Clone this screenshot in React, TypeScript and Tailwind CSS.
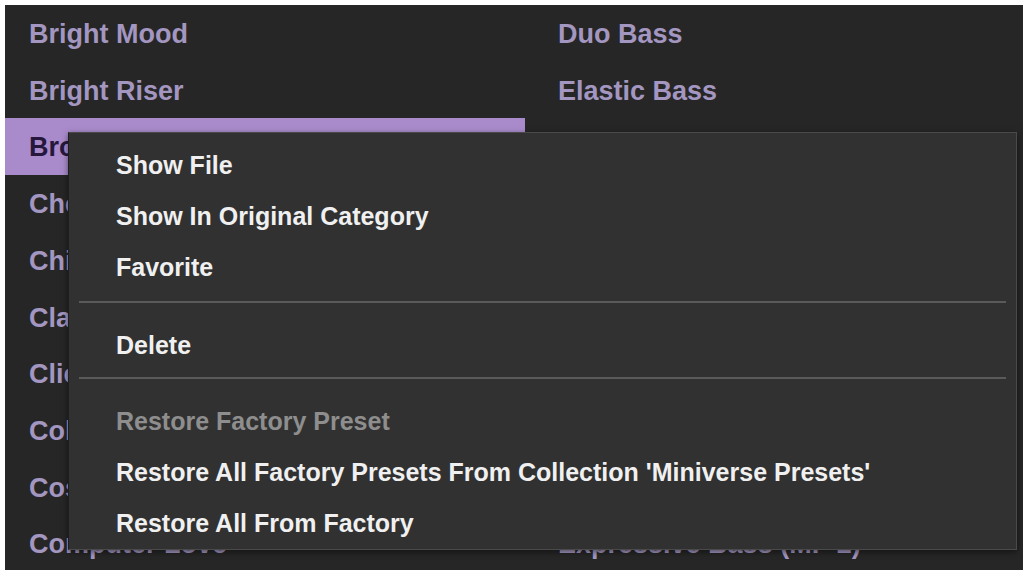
const leftRows = [
  'Bright Mood', 'Bright Riser', 'Broken Dreams', 'Chemical Pad', 'Chill Keys',
  'Classic Lead', 'Click Bass', 'Cold Wind', 'Cosmic Keys', 'Computer Love',
];
const rightRows = [
  'Duo Bass', 'Elastic Bass', 'Electric Bass', 'Electro Funk', 'Endless Night',
  'Entropy', 'Escape', 'Evolving Bass', 'Experimental', 'Expressive Bass (MP 2)',
];

const font = "font-['Liberation_Sans',Arial,sans-serif]";

type MenuEntry = { label: string; disabled?: boolean } | 'sep';

const menu: MenuEntry[] = [
  { label: 'Show File' },
  { label: 'Show In Original Category' },
  { label: 'Favorite' },
  'sep',
  { label: 'Delete' },
  'sep',
  { label: 'Restore Factory Preset', disabled: true },
  { label: "Restore All Factory Presets From Collection 'Miniverse Presets'" },
  { label: 'Restore All From Factory' },
];

export default function App() {
  return (
    <div className={`w-[1023px] h-[570px] bg-white pl-[5px] pt-[5px] overflow-hidden ${font}`}>
      <div className="relative h-full bg-[#262626] flex">
        {/* left column */}
        <div className="w-[520px] flex flex-col">
          {leftRows.map((r, i) => (
            <div
              key={r}
              className={`h-[56.7px] shrink-0 flex items-center pl-[24px] pt-[2px] text-[27px] font-bold ${
                i === 2 ? 'bg-[#a98bcb] text-[#26183d]' : 'text-[#a396c0]'
              }`}
            >
              {r}
            </div>
          ))}
        </div>

        {/* right column */}
        <div className="flex-1 flex flex-col pl-[33px]">
          {rightRows.map(r => (
            <div key={r} className="h-[56.7px] shrink-0 flex items-center pt-[2px] text-[27px] font-bold text-[#a396c0]">
              {r}
            </div>
          ))}
        </div>

        {/* context menu */}
        <div className="absolute left-[63px] top-[127px] w-[949px] h-[418px] bg-[#313131] border border-[#4a4a4a] border-l-[#1e1e1e] shadow-[0_2px_6px_rgba(0,0,0,0.5)] pt-[7px]">
          {menu.map((m, i) =>
            m === 'sep' ? (
              <div key={i} className={`mx-[10px] h-[2px] bg-[#5a5a5a] ${i === 3 ? 'mt-[8px]' : 'mt-[6px]'} mb-[17px]`} />
            ) : (
              <div
                key={i}
                className={`h-[51px] flex items-center pl-[47px] text-[25px] font-bold ${
                  m.disabled ? 'text-[#8e8e8e]' : 'text-[#f0f0f0]'
                }`}
              >
                {m.label}
              </div>
            )
          )}
        </div>
      </div>
    </div>
  );
}
